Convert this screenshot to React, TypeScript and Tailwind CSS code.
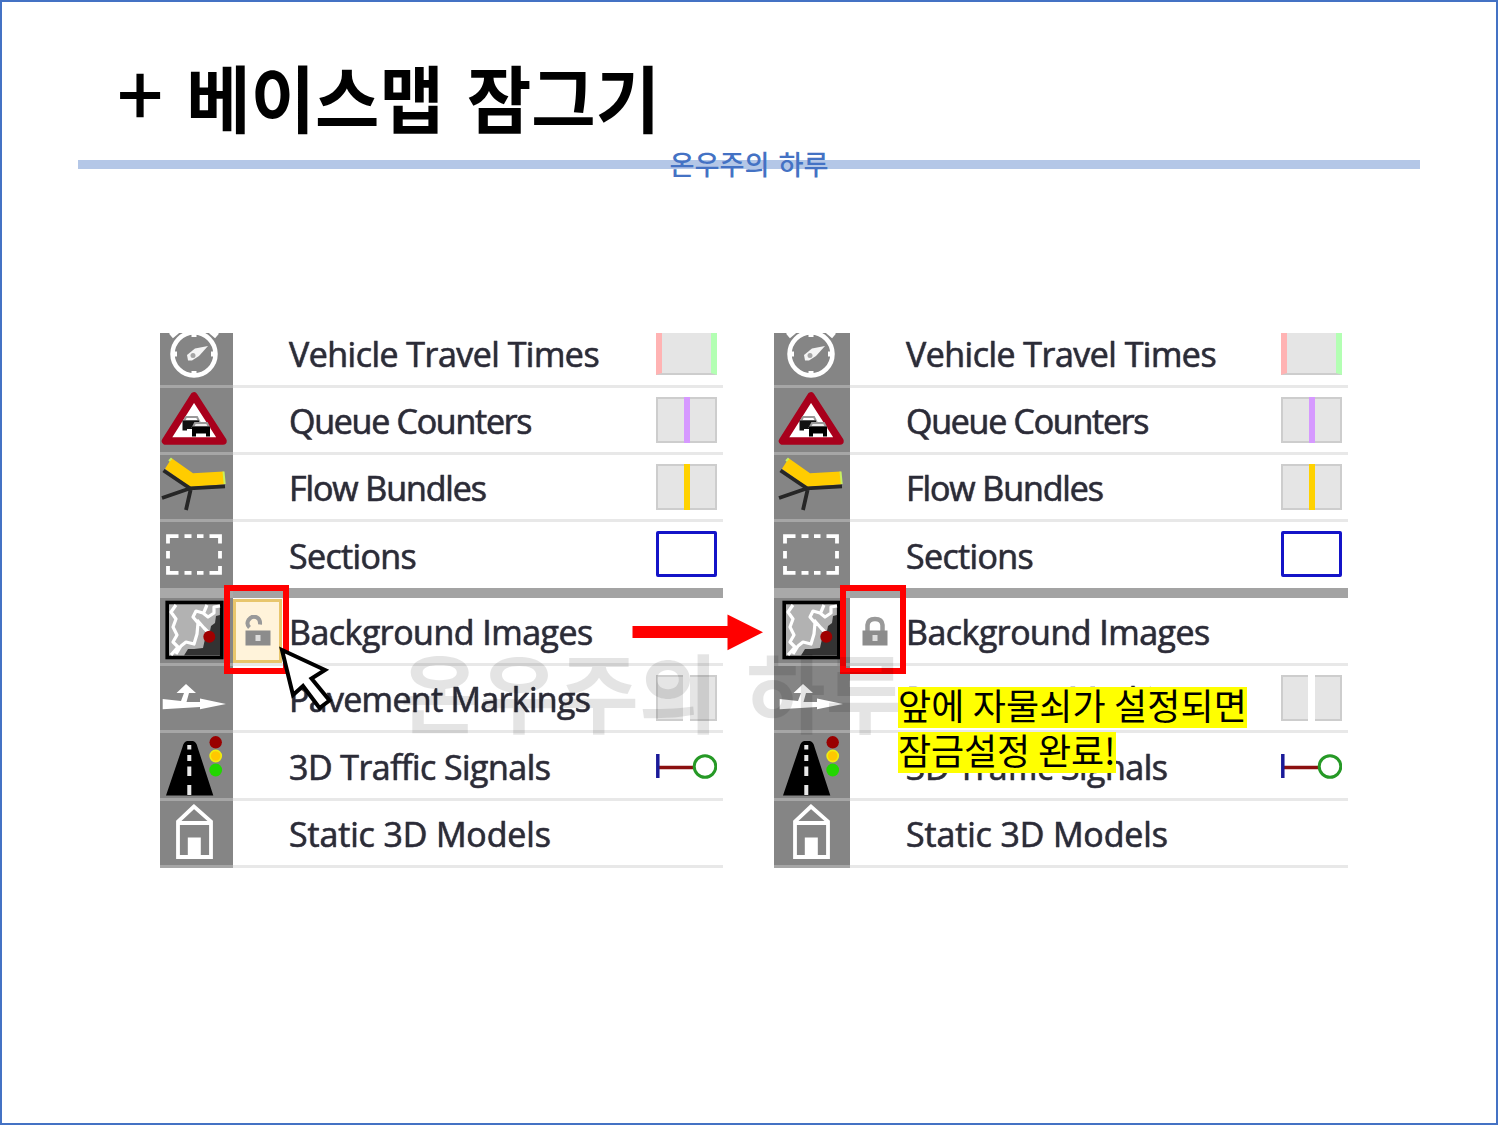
import type { ReactNode } from 'react';

function TravelTimeIcon() {
  return (
    <svg width="72" height="52" viewBox="0 0 72 52" fill="none">
      <circle cx="33" cy="21" r="21.5" stroke="#fff" strokeWidth="4.5" />
      <path d="M10 3 L16 -2 M56 3 L50 -2" stroke="#fff" strokeWidth="6" />
      <path d="M12 21h4M50 21h4M33 0v4M33 38v5" stroke="#fff" strokeWidth="5" />
      <path d="M26 22 L34 15.5 L47 13 L38 23 L31 27.500 L27 27.500 Z" fill="#f4f4f4" />
      <circle cx="32" cy="22.5" r="2.5" fill="#a5a5a5" />
    </svg>
  );
}

function QueueIcon() {
  return (
    <svg width="72" height="64" viewBox="0 0 72 64" fill="none">
      <path d="M33 8 L4.5 53 H62 Z" fill="#fff" stroke="#a8001c" strokeWidth="7.5" strokeLinejoin="round" />
      <path d="M23 33 L25 29 H36 L38 33 Z" fill="#fff" stroke="#999" strokeWidth="2" />
      <path d="M21.5 32.5H38V41H26V42.5H21.5Z" fill="#111" />
      <path d="M32 39 L34 35 H46 L48 39 Z" fill="#eee" stroke="#999" strokeWidth="2" />
      <path d="M31 38.5H49V48.5H45V45.5H35V48.5H31Z" fill="#000" />
    </svg>
  );
}

function FlowIcon() {
  return (
    <svg width="72" height="64" viewBox="0 0 72 64" fill="none">
      <path d="M10.7 3.3 L32 18.3 L62.5 16.5 L63.7 29.3 L29 32 L4 13.7 Z" fill="#fc0" />
      <path d="M8 6 L10.7 3.3 M62.5 16.5 L63.7 29" stroke="#c8f060" strokeWidth="2" />
      <path d="M2.5 15.5 L29 33.3 L64 31.3 M30 33 L1 43 M30 33 L25 55" stroke="#262626" strokeWidth="3.8" />
    </svg>
  );
}

function SectionIcon() {
  return (
    <svg width="72" height="64" viewBox="0 0 72 64" fill="none" stroke="#fff" strokeWidth="3.8">
      <path d="M7 21.5V14.2H17.5M23.5 14.2H30.5M36 14.2H42.5M48.5 14.2H59V21.5" />
      <path d="M7 44V50.8H17.5M23.5 50.8H30.5M36 50.8H42.5M48.5 50.8H59V44" />
      <path d="M7 29V36.5M59 29V36.5" />
    </svg>
  );
}

function BackgroundIcon() {
  return (
    <svg width="72" height="65" viewBox="0 0 72 65" fill="none">
      <rect x="6.2" y="4.5" width="54.5" height="55" fill="#b2b2b2" stroke="#000" strokeWidth="3.6" />
      <path d="M59 17 L55 18 L54 25 L50 28 L48 38 L44 41 L42 50 L33 51 L27 51 L23 57.5 H59 Z" fill="#333" />
      <path
        d="M15 7 L10 14 L15 21 L12 29 L16 37 L12 44 L17 49 L10 57 M59 8 L53 9 L53 15 L47 19 L42 15 L35 13 L32 19 L37 25 L36 36 L33 46 L25 44 L20 48 L15 56 M36 22 L43 30 L49 36 M46 7 L43 14"
        stroke="#fff"
        strokeWidth="3.2"
        strokeLinejoin="round"
      />
      <circle cx="48.3" cy="38.7" r="6" fill="#a00000" />
    </svg>
  );
}

function PavementIcon() {
  return (
    <svg width="72" height="64" viewBox="0 0 72 64">
      <path d="M1.7 33 L20 35 L23 27 H15.5 L25 18 L35 27 H28 L25.5 36 L39 36 V32.5 L65 38 L39 43.3 V41 L1.7 43.3 Z" fill="#fff" />
    </svg>
  );
}

function SignalIcon() {
  return (
    <svg width="72" height="65" viewBox="0 0 72 65">
      <path d="M26 8 H32 Q35.5 9 36.5 14 L52.3 62.5 H5 L21.5 14 Q22.5 9 26 8 Z" fill="#000" />
      <path d="M28.3 12V16.5M28.3 22V28M28.3 33.5V43M28.3 52V62" stroke="#e8e8e8" strokeWidth="4" />
      <circle cx="54.7" cy="9.3" r="6.2" fill="#990000" />
      <circle cx="54.7" cy="23" r="5.6" fill="#ffc800" stroke="#ee1" strokeWidth="1.6" />
      <circle cx="54.7" cy="37" r="6.4" fill="#22d600" />
    </svg>
  );
}

function ModelIcon() {
  return (
    <svg width="72" height="64" viewBox="0 0 72 64" fill="none">
      <path d="M33 5.5 L17 20.5 V56 H50 V20.5 Z M17 22H50" stroke="#fff" strokeWidth="3.8" />
      <rect x="26.8" y="36.5" width="13" height="20" fill="#fff" />
    </svg>
  );
}

function LockIcon({ open }: { open?: boolean }) {
  return (
    <svg width="26" height="32" viewBox="0 0 26 32" fill="none">
      {open ? (
        <path d="M4.500 12.500Q1 9 3.500 5Q7 0 12 2.500Q15.500 4.500 15 9.500" stroke="#999" strokeWidth="4" />
      ) : (
        <path d="M5.500 17V10Q6 4 13 4Q20 4 20.500 10V17" stroke="#999" strokeWidth="4.500" />
      )}
      <rect x=".5" y="15.500" width="25" height="15" fill="#8c8c8c" />
      <rect x="10.500" y="20" width="5" height="6" fill="#ddd" />
    </svg>
  );
}

const box = 'h-[46px] w-[61px] border-2 border-[#cdcdcd] bg-[#e5e5e5]';

const rows: { label: string; tracking: string; icon: ReactNode; height: string; inner: string; swatch: ReactNode }[] = [
  {
    label: 'Vehicle Travel Times',
    tracking: 'tracking-[-0.53px]',
    icon: <TravelTimeIcon />,
    height: 'h-[55px] border-b-[3px]',
    inner: 'h-[52px]',
    swatch: <div className="mb-[10px] h-[42px] w-[61px] border-x-[6px] border-b-2 border-b-[#cdcdcd] border-l-[#ffb3b3] border-r-[#b3ffb3] bg-[#e5e5e5]" />,
  },
  {
    label: 'Queue Counters',
    tracking: 'tracking-[-1.27px]',
    icon: <QueueIcon />,
    height: 'h-[67px] border-b-[3px]',
    inner: 'h-[64px]',
    swatch: <div className={`${box} flex justify-center`}><div className="-my-[2px] w-[6px] bg-[#d699ff]" /></div>,
  },
  {
    label: 'Flow Bundles',
    tracking: 'tracking-[-1.1px]',
    icon: <FlowIcon />,
    height: 'h-[67px] border-b-[3px]',
    inner: 'h-[64px]',
    swatch: <div className={`${box} flex justify-center`}><div className="-my-[2px] w-[6px] bg-[#ffd200]" /></div>,
  },
  {
    label: 'Sections',
    tracking: 'tracking-[-0.65px]',
    icon: <SectionIcon />,
    height: 'h-[76px] border-b-[10px]',
    inner: 'h-[66px]',
    swatch: <div className="mb-[2px] h-[46px] w-[61px] rounded-[2px] border-[3px] border-[#1414c8] bg-white" />,
  },
  {
    label: 'Background Images',
    tracking: 'tracking-[-0.53px]',
    icon: <BackgroundIcon />,
    height: 'h-[68px] border-b-[3px]',
    inner: 'h-[65px]',
    swatch: null,
  },
  {
    label: 'Pavement Markings',
    tracking: 'tracking-[-0.7px]',
    icon: <PavementIcon />,
    height: 'h-[67px] border-b-[3px]',
    inner: 'h-[64px]',
    swatch: (
      <div className="flex w-[61px] justify-between">
        <div className="h-[46px] w-[27px] border-2 border-r-0 border-[#cdcdcd] bg-[#e5e5e5]" />
        <div className="h-[46px] w-[27px] border-2 border-l-0 border-[#cdcdcd] bg-[#e5e5e5]" />
      </div>
    ),
  },
  {
    label: '3D Traffic Signals',
    tracking: 'tracking-[-0.55px]',
    icon: <SignalIcon />,
    height: 'h-[68px] border-b-[3px]',
    inner: 'h-[65px]',
    swatch: (
      <svg width="61" height="46" viewBox="0 0 61 46" fill="none">
        <path d="M3 24.500H37" stroke="#8b1010" strokeWidth="3.5" />
        <path d="M1.800 11V35" stroke="#1a1a99" strokeWidth="3.5" />
        <circle cx="49" cy="23.500" r="10.800" stroke="#269926" strokeWidth="3" />
      </svg>
    ),
  },
  {
    label: 'Static 3D Models',
    tracking: 'tracking-[-0.15px]',
    icon: <ModelIcon />,
    height: 'h-[67px] border-b-[3px]',
    inner: 'h-[64px]',
    swatch: null,
  },
];

function LayerList({ locked, className }: { locked: boolean; className: string }) {
  return (
    <div className={`flex flex-col overflow-hidden bg-white blur-[0.5px] ${className}`}>
      {rows.map((row) => {
        const thick = row.label === 'Sections';
        const first = row.label === 'Vehicle Travel Times';
        return (
          <div key={row.label} className={`flex shrink-0 ${row.height} ${thick ? 'border-[#a3a3a3]' : 'border-[#e8e8e8]'}`}>
            <div className={`shrink-0 bg-[#858585] ${row.height} ${thick ? 'border-[#a9a9a9]' : 'border-[#a6a6a6]'} ${locked ? 'w-[76px] pl-1' : 'w-[73px] pl-px'}`}>
              {row.icon}
            </div>
            <div className={`flex w-[56px] shrink-0 ${row.inner}`}>
              {row.label === 'Background Images' && (
                <div className={`mt-px flex h-[64px] w-[49px] items-center justify-center ${locked ? '' : 'border-[3px] border-[#e8c66c] bg-[#fff3da]'}`}>
                  <LockIcon open={!locked} />
                </div>
              )}
            </div>
            <div className={`flex flex-1 justify-between ${row.inner} ${first ? 'items-end' : 'items-center'}`}>
              <span className={`whitespace-nowrap font-['Open_Sans','Noto_Sans',sans-serif] text-[34px] leading-[40px] text-[#2b2b38] [-webkit-text-stroke:0.5px_#2b2b38] [text-shadow:-1px_0_#ffb36680,1px_0_#66b3ff80] ${row.tracking} ${first ? 'mb-[11px]' : 'pt-[2px]'}`}>
                {row.label}
              </span>
              <div className="mr-[6px] shrink-0">{row.swatch}</div>
            </div>
          </div>
        );
      })}
    </div>
  );
}

export default function App() {
  return (
    <div className="relative h-[1125px] w-[1498px] overflow-hidden border-2 border-[#4472c4] bg-white font-['Noto_Sans_CJK_KR',sans-serif]">
      <h1 className="ml-[115px] mt-[39px] h-[119px] w-max origin-left scale-x-[0.965] whitespace-nowrap text-[72.5px] font-bold leading-[110px] text-black [word-spacing:7.5px]">
        <span className="text-[84px] font-medium leading-none">+</span> 베이스맵 잠그기
      </h1>
      <div className="mx-[76px] flex h-[9px] items-center justify-center bg-[#b4c7e7]">
        <span className="whitespace-nowrap pb-px text-[27.2px] font-medium leading-none text-[#4472c4] [word-spacing:3px]">온우주의 하루</span>
      </div>

      <div className="ml-[158px] mt-[164px] flex gap-[51px]">
        <LayerList locked={false} className="h-[535px] w-[563px]" />
        <LayerList locked className="h-[535px] w-[574px]" />
      </div>

      {/* annotations over the two lists */}
      <div className="absolute left-[222px] top-[583px] h-[89px] w-[65px] border-[6px] border-[#f00]" />
      <div className="absolute left-[838px] top-[583px] h-[89px] w-[66px] border-[6px] border-[#f00]" />
      <svg className="absolute left-[630px] top-[612px]" width="132" height="38" viewBox="0 0 132 38">
        <path d="M0.500 12H95.500V0.500L131 18.300L95.500 36.300V24H0.500Z" fill="#f00" />
      </svg>
      <svg className="absolute left-[275px] top-[642px]" width="60" height="70" viewBox="0 0 60 70">
        <path d="M5 6 L48 26 L34.500 34.500 L52.500 56.500 L42.500 64 L26 42 L16 51 Z" fill="#fff" stroke="#000" strokeWidth="4" />
      </svg>
      <p className="absolute left-[398px] top-[628px] whitespace-nowrap text-[86.5px] font-bold leading-[120px] text-black opacity-10 [word-spacing:8px]">
        온우주의 하루
      </p>
      <p className="absolute left-[896px] top-[683px] whitespace-nowrap text-[36px] leading-[45px] text-black">
        <span className="flex h-[45px] w-max items-center"><span className="flex h-[41px] items-center bg-[#ff0] pb-[6px] tracking-[0.15px]">앞에 자물쇠가 설정되면</span></span>
        <span className="flex h-[45px] w-max items-center"><span className="flex h-[41px] items-center bg-[#ff0] pb-[6px] tracking-[-0.1px]">잠금설정 완료!</span></span>
      </p>
    </div>
  );
}
